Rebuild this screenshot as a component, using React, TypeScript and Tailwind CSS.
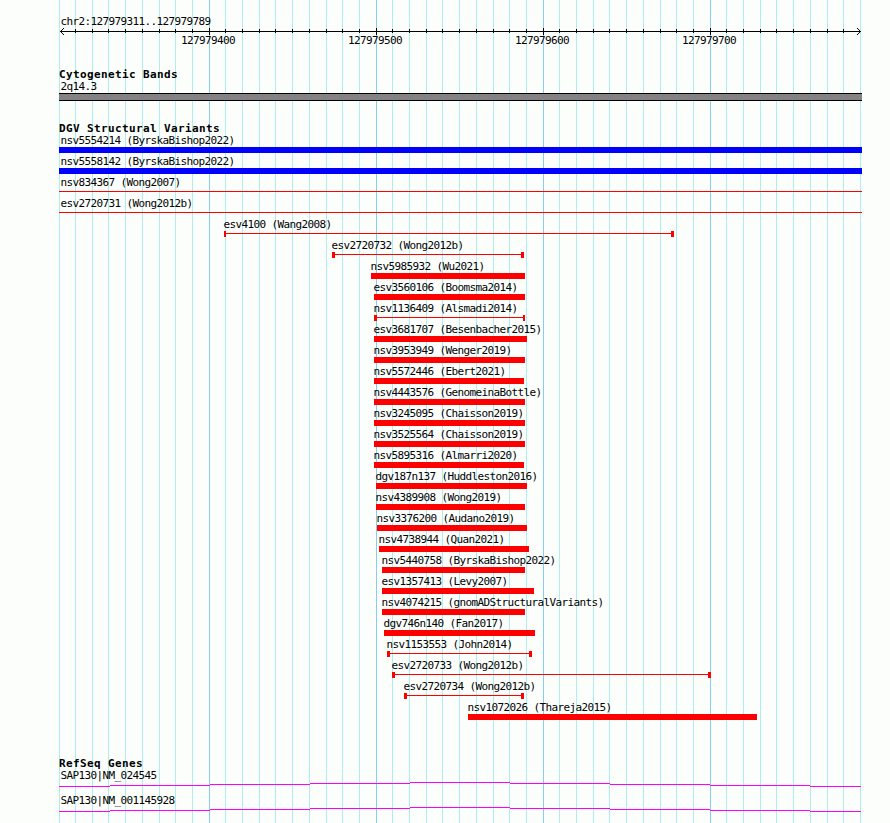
const GRID = [
  59, 75, 92, 108, 125, 142, 159, 175, 192, 209, 225, 242, 259, 275, 292, 309, 326, 342, 359, 376, 392, 409, 426, 442,
  459, 476, 493, 509, 526, 543, 559, 576, 593, 609, 626, 643, 660, 676, 693, 710, 726, 743, 760, 776, 793, 810, 827,
  843, 860,
];
const MAJOR = [209, 376, 543, 710];

type Variant = {
  name: string;
  start: number;
  end: number;
  kind: "gain" | "bar" | "line" | "range";
  caps?: [number, number];
};

const VARIANTS: Variant[] = [
  { name: "nsv5554214 (ByrskaBishop2022)", start: 59, end: 862, kind: "gain" },
  { name: "nsv5558142 (ByrskaBishop2022)", start: 59, end: 862, kind: "gain" },
  { name: "nsv834367 (Wong2007)", start: 59, end: 862, kind: "line" },
  { name: "esv2720731 (Wong2012b)", start: 59, end: 862, kind: "line" },
  { name: "esv4100 (Wang2008)", start: 224, end: 674, kind: "range", caps: [2, 3] },
  { name: "esv2720732 (Wong2012b)", start: 332, end: 524, kind: "range", caps: [3, 3] },
  { name: "nsv5985932 (Wu2021)", start: 371, end: 525, kind: "bar" },
  { name: "esv3560106 (Boomsma2014)", start: 374, end: 525, kind: "bar" },
  { name: "nsv1136409 (Alsmadi2014)", start: 374, end: 525, kind: "range", caps: [3, 2] },
  { name: "esv3681707 (Besenbacher2015)", start: 374, end: 527, kind: "bar" },
  { name: "nsv3953949 (Wenger2019)", start: 374, end: 525, kind: "bar" },
  { name: "nsv5572446 (Ebert2021)", start: 374, end: 524, kind: "bar" },
  { name: "nsv4443576 (GenomeinaBottle)", start: 374, end: 525, kind: "bar" },
  { name: "nsv3245095 (Chaisson2019)", start: 374, end: 525, kind: "bar" },
  { name: "nsv3525564 (Chaisson2019)", start: 374, end: 525, kind: "bar" },
  { name: "nsv5895316 (Almarri2020)", start: 374, end: 524, kind: "bar" },
  { name: "dgv187n137 (Huddleston2016)", start: 376, end: 527, kind: "bar" },
  { name: "nsv4389908 (Wong2019)", start: 376, end: 525, kind: "bar" },
  { name: "nsv3376200 (Audano2019)", start: 377, end: 527, kind: "bar" },
  { name: "nsv4738944 (Quan2021)", start: 379, end: 529, kind: "bar" },
  { name: "nsv5440758 (ByrskaBishop2022)", start: 382, end: 525, kind: "bar" },
  { name: "esv1357413 (Levy2007)", start: 382, end: 534, kind: "bar" },
  { name: "nsv4074215 (gnomADStructuralVariants)", start: 382, end: 525, kind: "bar" },
  { name: "dgv746n140 (Fan2017)", start: 384, end: 535, kind: "bar" },
  { name: "nsv1153553 (John2014)", start: 387, end: 532, kind: "range", caps: [3, 3] },
  { name: "esv2720733 (Wong2012b)", start: 392, end: 711, kind: "range", caps: [3, 3] },
  { name: "esv2720734 (Wong2012b)", start: 404, end: 524, kind: "range", caps: [3, 3] },
  { name: "nsv1072026 (Thareja2015)", start: 468, end: 757, kind: "bar" },
];

// Each step of a gene's intron hat: start, end, vertical offset.
const GENE_STEPS = [
  [59, 110, 4], [110, 210, 3], [210, 310, 2], [310, 410, 1], [410, 510, 0],
  [510, 610, 1], [610, 710, 2], [710, 810, 3], [810, 861, 4],
];

function Gridlines() {
  return (
    <svg width="890" height="823" shapeRendering="crispEdges" className="col-start-1 row-start-1">
      {GRID.map((x) => (
        <rect key={x} x={x} y="0" width="1" height="823" fill={MAJOR.includes(x) ? "#87ceeb" : "#afeeee"} />
      ))}
    </svg>
  );
}

function Title({ children }: { children: string }) {
  return <h2 className="ml-[59px] h-[12px] text-[11px] leading-[16px] font-bold tracking-[0.378px]">{children}</h2>;
}

function Label({ children }: { children: string }) {
  return <div className="ml-[60.4px] h-[14px]">{children}</div>;
}

function Ruler() {
  return (
    <div className="pt-[14px]">
      <Label>chr2:127979311..127979789</Label>
      <svg width="890" height="7" shapeRendering="crispEdges" className="block">
        <rect x="60" y="3" width="801" height="1" />
        {GRID.slice(1, -1).map((x) =>
          MAJOR.includes(x) ? (
            <rect key={x} x={x} y="0" width="1" height="7" />
          ) : (
            <rect key={x} x={x} y="1" width="1" height="4" />
          ),
        )}
        {[0, 1, 2, 3].map((i) => (
          <g key={i}>
            <rect x={60 + i} y={3 - i} width="1" height="1" />
            <rect x={60 + i} y={3 + i} width="1" height="1" />
            <rect x={860 - i} y={3 - i} width="1" height="1" />
            <rect x={860 - i} y={3 + i} width="1" height="1" />
          </g>
        ))}
      </svg>
      <div className="-mt-[2px] ml-[181px] flex h-[14px]">
        {["127979400", "127979500", "127979600", "127979700"].map((t) => (
          <span key={t} className="w-[167px]">{t}</span>
        ))}
      </div>
    </div>
  );
}

function Glyph({ v }: { v: Variant }) {
  const width = v.end - v.start;
  if (v.kind === "gain" || v.kind === "bar") {
    return <div className={v.kind === "gain" ? "h-[6px] bg-[#0000ff]" : "h-[6px] bg-[#ff0000]"} style={{ width }} />;
  }
  const [l, r] = v.caps ?? [0, 0];
  return (
    <div className="flex h-[6px]" style={{ width }}>
      <div className="bg-[#ff0000]" style={{ width: l }} />
      <div className="mt-[2px] h-px flex-1 bg-[#ff0000]" />
      <div className="bg-[#ff0000]" style={{ width: r }} />
    </div>
  );
}

function VariantRow({ v }: { v: Variant }) {
  return (
    <div className="h-[21px]" style={{ marginLeft: v.start }}>
      <div className={v.start === 59 ? "h-[14px] pl-[1.4px]" : "h-[14px] -ml-[0.6px]"}>{v.name}</div>
      <Glyph v={v} />
    </div>
  );
}

function Gene({ name }: { name: string }) {
  return (
    <div className="h-[25px]">
      <Label>{name}</Label>
      <svg width="890" height="5" shapeRendering="crispEdges" className="block">
        {GENE_STEPS.map(([a, b, y]) => (
          <rect key={a} x={a} y={y} width={b - a} height="1" fill="#ff00ff" />
        ))}
      </svg>
    </div>
  );
}

export default function App() {
  return (
    <main className="grid h-[823px] w-[890px] grid-cols-[890px] overflow-hidden bg-[#fcfefc] font-['DejaVu_Sans_Mono',monospace] text-[11px] leading-[16px] tracking-[-0.622px] whitespace-pre text-black">
      <Gridlines />
      <div className="col-start-1 row-start-1">
        <Ruler />
        <section className="mt-[20px]">
          <Title>Cytogenetic Bands</Title>
          <Label>2q14.3</Label>
          <div className="ml-[59px] h-[8px] w-[803px] border-y border-black bg-[#848284]" />
        </section>
        <section className="mt-[20px]">
          <Title>DGV Structural Variants</Title>
          {VARIANTS.map((v) => (
            <VariantRow key={v.name} v={v} />
          ))}
        </section>
        <section className="mt-[35px]">
          <Title>RefSeq Genes</Title>
          <Gene name="SAP130|NM_024545" />
          <Gene name="SAP130|NM_001145928" />
        </section>
      </div>
    </main>
  );
}
